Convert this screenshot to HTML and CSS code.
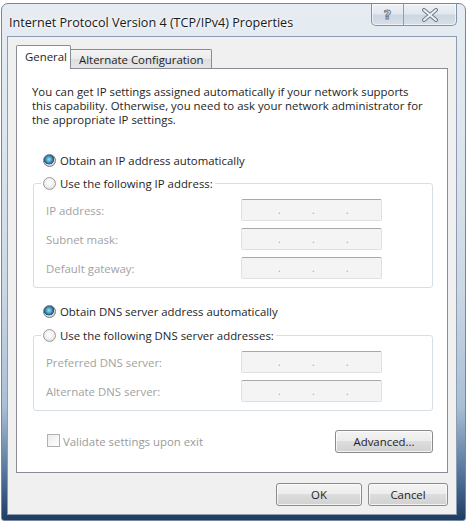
FILE: index.html
```html
<!DOCTYPE html>
<html>
<head>
<meta charset="utf-8">
<link rel="stylesheet" href="styles.css">
</head>
<body>
<div class="window">
  <div class="titlebar">
    <span class="title">Internet Protocol Version 4 (TCP/IPv4) Properties</span>
    <div class="caption">
      <span class="cbtn help">?</span>
      <span class="cbtn close">
        <svg width="18" height="14" viewBox="0 0 18 14"><path d="M3 2 L15 12 M15 2 L3 12" stroke="#6f7a88" stroke-width="4" stroke-linecap="round"/><path d="M3 2 L15 12 M15 2 L3 12" stroke="#eef2f6" stroke-width="2" stroke-linecap="round"/></svg>
      </span>
    </div>
  </div>
  <div class="client">
    <div class="tabs">
      <div class="tab active">General</div>
      <div class="tab alt">Alternate Configuration</div>
    </div>
    <div class="panel">
      <p class="intro">You can get IP settings assigned automatically if your network supports this capability. Otherwise, you need to ask your network administrator for the appropriate IP settings.</p>

      <div class="radio-row first">
        <span class="radio checked"></span><span>Obtain an IP address automatically</span>
      </div>
      <fieldset class="group g1">
        <legend><span class="radio"></span><span>Use the following IP address:</span></legend>
        <div class="field-row"><span class="lbl">IP address:</span><span class="ipbox"><i>.</i><i>.</i><i>.</i></span></div>
        <div class="field-row"><span class="lbl">Subnet mask:</span><span class="ipbox"><i>.</i><i>.</i><i>.</i></span></div>
        <div class="field-row"><span class="lbl">Default gateway:</span><span class="ipbox"><i>.</i><i>.</i><i>.</i></span></div>
      </fieldset>

      <div class="radio-row second">
        <span class="radio checked"></span><span>Obtain DNS server address automatically</span>
      </div>
      <fieldset class="group g2">
        <legend><span class="radio"></span><span>Use the following DNS server addresses:</span></legend>
        <div class="field-row"><span class="lbl">Preferred DNS server:</span><span class="ipbox"><i>.</i><i>.</i><i>.</i></span></div>
        <div class="field-row"><span class="lbl">Alternate DNS server:</span><span class="ipbox"><i>.</i><i>.</i><i>.</i></span></div>
      </fieldset>

      <div class="bottom-row">
        <span class="check-wrap"><span class="checkbox"></span><span class="dim">Validate settings upon exit</span></span>
        <span class="btn adv">Advanced...</span>
      </div>
    </div>
    <div class="buttons">
      <span class="btn ok">OK</span>
      <span class="btn cancel">Cancel</span>
    </div>
  </div>
</div>
</body>
</html>
```

FILE: styles.css
```css
* { box-sizing: border-box; }
html, body { margin: 0; padding: 0; background: #ffffff; }
body {
  font-family: "Open Sans", "Noto Sans", sans-serif;
  font-size: 11.4px;
  color: #1e1e1e;
  width: 468px;
  height: 527px;
  overflow: hidden;
}
.window {
  margin: 3px 0 0 1px;
  width: 465px;
  height: 518px;
  border: 1px solid #75879c;
  border-radius: 7px 7px 3px 3px;
  background: linear-gradient(180deg, #e6ecf2 0%, #dde6ee 25%, #cbd8e5 55%, #a9bfd6 78%, #4d6f96 92%, #1f3d63 100%);
  display: flex;
  flex-direction: column;
}
.titlebar {
  height: 32px;
  display: flex;
  justify-content: space-between;
  align-items: flex-start;
  padding-left: 7px;
}
.title {
  margin-top: 10px;
  font-size: 12.6px;
  color: #1a1a1a;
  text-shadow: 0 0 6px #ffffff, 0 0 3px #ffffff;
  white-space: nowrap;
}
.caption {
  display: flex;
  margin-right: 8px;
  height: 22px;
  border: 1px solid #8393a6;
  border-top: none;
  border-radius: 0 0 5px 5px;
  background: linear-gradient(180deg, #eef2f6 0%, #e2e8ef 45%, #ccd6e1 55%, #d8e0e9 100%);
  box-shadow: inset 0 0 0 1px rgba(255,255,255,0.6);
  overflow: hidden;
}
.cbtn {
  display: flex;
  align-items: center;
  justify-content: center;
}
.help {
  width: 32px;
  border-right: 1px solid #8e9db0;
  font-family: "DejaVu Sans", sans-serif;
  font-weight: bold;
  font-size: 13px;
  color: #e9eef3;
  -webkit-text-stroke: 1px #6f7a88;
}
.close { width: 52px; }

.client {
  flex: 1;
  margin: 0 8px 5px 5px;
  border: 1px solid #8d9cae;
  background: #f0f0f0;
  padding: 8px 8px 8px 8px;
  display: flex;
  flex-direction: column;
}
.tabs {
  height: 24px;
  margin-bottom: -1px;
  display: flex;
  align-items: flex-end;
  position: relative;
  z-index: 1;
}
.tab {
  border: 1px solid #898c95;
  border-bottom: none;
  display: flex;
  align-items: center;
  white-space: nowrap;
}
.tab.active {
  height: 24px;
  width: 55px;
  background: #ffffff;
  padding: 0 0 2px 8px;
  border-radius: 2px 2px 0 0;
}
.tab.alt {
  height: 19px;
  margin-bottom: 1px;
  border-left: none;
  width: 141px;
  background: linear-gradient(180deg, #f3f3f3 0%, #ebebeb 50%, #dedede 51%, #e6e6e6 100%);
  padding-left: 8px;
  border-radius: 0 2px 0 0;
}
.panel {
  height: 405px;
  border: 1px solid #898c95;
  background: #ffffff;
  padding: 16px 14px 0 15px;
}
.intro {
  margin: 0;
  line-height: 14px;
  width: 392px;
}
.radio-row {
  height: 16px;
  display: flex;
  align-items: center;
  margin-left: 11px;
}
.radio-row.first { margin-top: 25px; }
.radio-row.second { margin-top: 15px; }
.radio {
  width: 13px;
  height: 13px;
  border-radius: 50%;
  margin-right: 4px;
  border: 1px solid #9a9a9a;
  background: radial-gradient(circle at 50% 40%, #ffffff 0%, #f1f1f1 45%, #d6d6d6 100%);
  flex: none;
}
.radio.checked {
  border-color: #6e7b84;
  background:
    radial-gradient(circle at 45% 40%, #a8e0f4 0%, #3c93bd 35%, #1e4f6e 55%, rgba(0,0,0,0) 58%),
    radial-gradient(circle, #e9e9e9 0%, #cfcfcf 100%);
}
.group {
  margin: 0 0 0 1px;
  width: 400px;
  border: 1px solid #d5dfe5;
  border-radius: 3px;
  padding: 8px 0 8px 7px;
  min-width: 0;
}
.g1 { margin-top: 7px; }
.g2 { margin-top: 8px; }
.group legend {
  padding: 0 2px;
  height: 16px;
  display: flex;
  align-items: center;
}
.field-row {
  display: flex;
  align-items: center;
  height: 22px;
  margin-left: 5px;
}
.field-row + .field-row { margin-top: 7px; }
.lbl {
  width: 195px;
  color: #a2a2a2;
}
.ipbox {
  width: 141px;
  height: 22px;
  border: 1px solid #e0e0e0;
  border-top-color: #a9a9a9;
  border-radius: 2px;
  background: #f4f4f4;
  display: flex;
  padding-left: 36px;
  align-items: center;
}
.ipbox i {
  font-style: normal;
  width: 34px;
  color: #a8a8a8;
  font-size: 10px;
}
.bottom-row {
  margin-top: 19px;
  height: 23px;
  display: flex;
  align-items: center;
  justify-content: space-between;
}
.check-wrap {
  display: flex;
  align-items: center;
  margin-left: 15px;
}
.checkbox {
  width: 13px;
  height: 13px;
  border: 1px solid #b0b0b0;
  background: linear-gradient(135deg, #ececec 0%, #ffffff 100%);
  margin-right: 3px;
  margin-top: -3px;
}
.dim { color: #9a9a9a; }
.btn {
  height: 23px;
  border: 1px solid #8b8b8b;
  border-radius: 3px;
  background: linear-gradient(180deg, #f4f4f4 0%, #ececec 48%, #dddddd 50%, #d1d1d1 100%);
  box-shadow: inset 0 0 0 1px rgba(255,255,255,0.75);
  display: flex;
  align-items: center;
  justify-content: center;
  color: #1e1e1e;
}
.adv { width: 98px; }
.buttons {
  margin-top: 10px;
  display: flex;
  justify-content: flex-end;
  gap: 6px;
}
.ok { width: 86px; }
.cancel { width: 80px; }
```
